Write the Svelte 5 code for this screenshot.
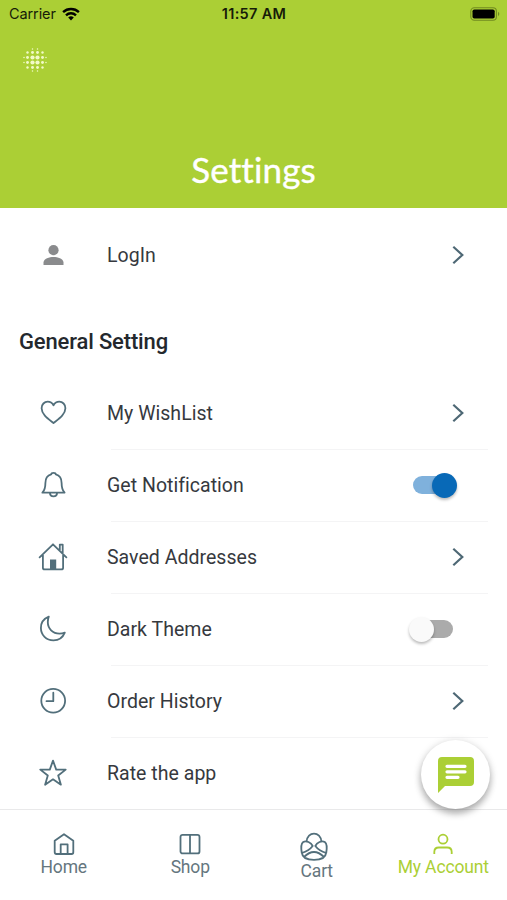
<script>
  const rows = [
    { icon: 'heart', label: 'My WishList', end: 'arrow' },
    { icon: 'bell', label: 'Get Notification', end: 'on' },
    { icon: 'house', label: 'Saved Addresses', end: 'arrow' },
    { icon: 'moon', label: 'Dark Theme', end: 'off' },
    { icon: 'clock', label: 'Order History', end: 'arrow' },
    { icon: 'star', label: 'Rate the app', end: 'none' }
  ];
  const dots = [-11, -7.5, -2.5, 2.5, 7.5, 11];
  const dotSize = (x, y) => {
    const d = Math.hypot(x, y);
    return d < 4 ? 2.1 : d < 9 ? 1.45 : d < 11 ? 1.2 : d < 12 ? 0.75 : 0;
  };
</script>

{#snippet chevron()}
  <svg class="chevron" width="14" height="20" viewBox="0 0 14 20"><path d="M2.300 1.800l9 8.200-9 8.200" /></svg>
{/snippet}

<div class="screen">
  <header>
    <div class="status">
      <span class="carrier">Carrier
        <svg width="18" height="14" viewBox="0 0 18 14">
          <path d="M1.1 5.1a11.5 11.5 0 0 1 15.8 0" />
          <path d="M4 8.3a7.3 7.3 0 0 1 10 0" />
          <path class="tip" d="M6.2 10.6a4 4 0 0 1 5.6 0L9 13.6z" />
        </svg>
      </span>
      <span class="time">11:57 AM</span>
      <svg class="battery" width="31" height="14" viewBox="0 0 31 14">
        <rect x=".8" y=".8" width="25.6" height="12.4" rx="3.5" fill="none" stroke="#718b20" stroke-width="1.1" />
        <rect x="2.5" y="2.4" width="22.2" height="9.2" rx="1.8" />
        <path d="M28 4.8q2.6 2.2 0 4.4z" fill="#718b20" />
      </svg>
    </div>
    <svg class="logo" width="26" height="26" viewBox="-13 -13 26 26">
      {#each dots as x}
        {#each dots as y}
          <circle cx={x} cy={y} r={dotSize(x, y)} />
        {/each}
      {/each}
    </svg>
    <h1>Settings</h1>
  </header>

  <main>
    <div class="row login">
      <svg class="icon" viewBox="0 0 32 32"><g fill="#8a8b8d" stroke="none"><circle cx="16.5" cy="11.200" r="5.100" /><path d="M6.500 26v-2.600c0-3.600 6-5.400 10-5.400s10 1.800 10 5.400V26z" /></g></svg>
      <span class="label">LogIn</span>
      {@render chevron()}
    </div>
    <h2>General Setting</h2>
    {#each rows as row}
      <div class="row">
        <svg class="icon" viewBox="0 0 32 32">
          {#if row.icon === 'heart'}
            <path d="M16.5 8.2C15 5.5 12.800 4.700 10.700 4.700 7.400 4.700 4.600 7.300 4.600 11.300c0 6 6.500 10.400 11.900 14.700 5.400-4.300 11.900-8.700 11.900-14.700 0-4-2.800-6.600-6.100-6.600-2.100 0-4.300.8-5.800 3.500z" />
          {:else if row.icon === 'bell'}
            <path d="M14.200 5.300c.2-2 4.400-2 4.600 0 4 1 5.800 4.300 5.800 8.600 0 5.300.6 7.200 3 9.800H5.400c2.400-2.600 3-4.500 3-9.800 0-4.300 1.800-7.600 5.800-8.600zM12.900 23.900c.3 4.600 6.900 4.600 7.200 0" />
          {:else if row.icon === 'house'}
            <path d="M2.600 16.300 16 3.300l13.400 13M5.900 14v12.700q0 1.700 1.700 1.700h16.800q1.700 0 1.700-1.700V14M22.800 9V3.600h2.900V12" /><path d="M13 28v-9.500h6.200V28z" fill="#526f7b" stroke="none" />
          {:else if row.icon === 'moon'}
            <path d="M11.800 3.700C6.500 5.900 3.900 10 3.900 15c0 7 5.500 12.400 12.500 12.400 5.400 0 9.400-2.700 11.400-7.700-2 .7-3.500.9-5.300.9-6.800 0-11.700-5-11.700-11.500 0-2 .3-3.700 1-5.400z" />
          {:else if row.icon === 'clock'}
            <circle cx="16.200" cy="15.700" r="11.900" /><path d="M16.300 7.700v8.500H9.500" />
          {:else}
            <path d="m16 3.600 3.200 9h9.500l-7.500 5.900 2.700 9.200-7.900-5.400-7.900 5.400 2.700-9.200-7.500-5.900h9.500z" />
          {/if}
        </svg>
        <span class="label">{row.label}</span>
        {#if row.end === 'arrow'}
          {@render chevron()}
        {:else if row.end !== 'none'}
          <span class="switch {row.end}"><i></i></span>
        {/if}
      </div>
    {/each}
  </main>

  <button class="chat" aria-label="Chat">
    <svg width="36" height="36" viewBox="0 0 36 36"><path d="M4 0h28q4 0 4 4v21q0 4-4 4H7l-7 7V4q0-4 4-4z" fill="#abcf35" /><path d="M9 9.300h18M9 14.800h18M9 20.300h11" stroke="#fff" stroke-width="3.200" stroke-linecap="round" /></svg>
  </button>

  <nav>
    <div class="tab">
      <svg width="28" height="28" viewBox="0 0 28 28"><path d="M4.700 10.800 14 4.200l9.300 6.600v11.500q0 1.700-1.700 1.700H6.400q-1.700 0-1.700-1.700zM10.700 24v-9.700h6.900V24" /></svg>
      <span>Home</span>
    </div>
    <div class="tab shop">
      <svg width="28" height="28" viewBox="0 0 28 28"><rect x="4.500" y="4.900" width="19" height="18.500" rx="2" /><path d="M14 5v18" /></svg>
      <span>Shop</span>
    </div>
    <div class="tab cart">
      <svg width="32" height="32" viewBox="0 0 32 32"><path d="M8.600 11.800C9 .9 23 .9 23.400 11.800M14.700 16C13 12.500 8.300 10.200 5.200 12 3 13.700 3 18.500 3.800 23 8 21.800 12 19.500 14.700 16zM17.300 16c1.700-3.500 6.400-5.800 9.500-4 2.200 1.700 2.200 6.500 1.400 11C24 21.800 20 19.500 17.300 16zM3.800 22.600C4.400 28.500 10 29.900 16 29.900S27.600 28.500 28.200 22.600M6 27C9 24 13 22 16 22s7 2 10 5" /></svg>
      <span>Cart</span>
    </div>
    <div class="tab active">
      <svg width="28" height="28" viewBox="0 0 28 28"><circle cx="14" cy="9.200" r="4.500" /><path d="M5.300 24v-2q0-4.500 4.500-4.500h8.400q4.500 0 4.500 4.500v2" /></svg>
      <span>My Account</span>
    </div>
  </nav>
</div>

<style>
  :global(body) { margin: 0; background: #fff; }
  .screen { position: relative; width: 507px; height: 900px; overflow: hidden; display: flex; flex-direction: column; background: #fff; font-family: Roboto, sans-serif; color: #36393e; }
  svg { display: block; flex: none; }
  header { height: 208px; flex: none; background: #abcf35; display: flex; flex-direction: column; }
  .status { display: grid; grid-template-columns: 1fr auto 1fr; align-items: center; height: 27px; padding: 0 6px 0 9px; font-family: Inter, sans-serif; font-size: 14.500px; color: #171c08; }
  .carrier { display: flex; align-items: center; gap: 6px; letter-spacing: -.1px; }
  .carrier svg { fill: none; stroke: #000; stroke-width: 2.400; }
  .carrier svg .tip { fill: #000; stroke: none; }
  .time { font-weight: 600; font-size: 14.500px; letter-spacing: .3px; margin-left: -2px; }
  .battery { justify-self: end; }
  .logo { margin: 20px 0 0 22px; fill: #f2fac8; }
  h1 { margin: 71px 0 0; height: 50px; text-align: center; color: #fff; font: 400 35px/50px Lato, sans-serif; font-variant-ligatures: none; letter-spacing: .1px; -webkit-text-stroke: .4px #fff; }
  main { flex: 1; min-height: 0; overflow: hidden; }
  .row { display: flex; align-items: center; height: 72px; box-sizing: border-box; padding: 0 42px 0 37px; background: linear-gradient(#f4f4f5, #f4f4f5) 111px 0 / 377px 1px no-repeat; }
  .login, h2 + .row { background: none; }
  .login { height: 94px; }
  .icon { width: 32px; height: 32px; fill: none; stroke: #526f7b; stroke-width: 1.800; stroke-linejoin: round; stroke-linecap: round; }
  .label { flex: 1; margin-left: 38px; padding-top: 2px; font-size: 19.500px; line-height: 28px; letter-spacing: .03px; }
  .chevron { fill: none; stroke: #4e6875; stroke-width: 2.200; }
  h2 { margin: 0; height: 75px; box-sizing: border-box; padding: 25px 0 0 19px; font-size: 22px; line-height: 30px; font-weight: 500; letter-spacing: -.15px; color: #24282d; }
  .switch { position: relative; width: 40px; height: 18px; border-radius: 9px; background: #7fb1dc; margin-right: 12px; }
  .switch i { position: absolute; top: -3.500px; right: -4px; width: 25px; height: 25px; border-radius: 50%; background: #0869b7; box-shadow: 0 2px 3px #0004; }
  .off { background: #ababab; }
  .off i { right: 19px; background: #fafafa; }
  .chat { position: absolute; left: 421px; top: 740px; width: 69px; height: 69px; padding: 0; border: 0; border-radius: 50%; background: #fff; display: grid; place-items: center; box-shadow: 0 5px 7px #0004, 0 1px 8px #0002; }
  nav { height: 91px; flex: none; box-sizing: border-box; border-top: 1px solid #e9e9ea; display: grid; grid-template-columns: repeat(4, 126.500px); padding-left: .5px; color: #65767e; }
  .tab { display: flex; flex-direction: column; align-items: center; padding-top: 20px; font-size: 17.500px; line-height: 18px; letter-spacing: -.15px; }
  .tab svg { fill: none; stroke: #526f7b; stroke-width: 1.800; stroke-linejoin: round; }
  .cart svg { margin-right: 6px; }
  .tab.active svg { stroke: #abcf35; }
  .active { color: #abcf35; }
</style>
